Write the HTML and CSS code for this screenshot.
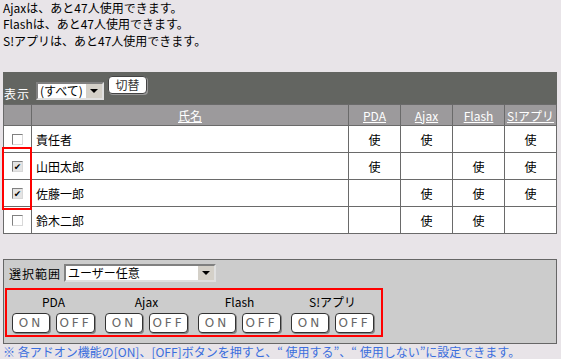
FILE: index.html
```html
<!DOCTYPE html>
<html lang="ja">
<head>
  <meta charset="UTF-8">
  <title>アドオン設定</title>
  <link rel="stylesheet" href="styles.css">
</head>
<body>

  <div class="notice">
    <p>Ajaxは、あと47人使用できます。</p>
    <p>Flashは、あと47人使用できます。</p>
    <p class="last">S!アプリは、あと47人使用できます。</p>
  </div>

  <div class="panel">
    <div class="toolbar">
      <span class="toolbar-label">表示</span>
      <div class="select select-small">
        <span class="select-text">(すべて)</span>
        <span class="select-arrow"></span>
      </div>
      <button class="btn-switch">切替</button>
    </div>

    <div class="table-wrap">
      <table class="users">
        <thead>
          <tr>
            <th class="col-check"></th>
            <th class="col-name"><a href="#">氏名</a></th>
            <th class="col-opt"><a href="#">PDA</a></th>
            <th class="col-opt"><a href="#">Ajax</a></th>
            <th class="col-opt"><a href="#">Flash</a></th>
            <th class="col-opt"><a href="#">S!アプリ</a></th>
          </tr>
        </thead>
        <tbody>
          <tr>
            <td class="col-check"><span class="check"></span></td>
            <td class="col-name">責任者</td>
            <td>使</td>
            <td>使</td>
            <td></td>
            <td>使</td>
          </tr>
          <tr>
            <td class="col-check"><span class="check checked">&#10004;</span></td>
            <td class="col-name">山田太郎</td>
            <td>使</td>
            <td></td>
            <td>使</td>
            <td>使</td>
          </tr>
          <tr>
            <td class="col-check"><span class="check checked">&#10004;</span></td>
            <td class="col-name">佐藤一郎</td>
            <td></td>
            <td>使</td>
            <td>使</td>
            <td>使</td>
          </tr>
          <tr>
            <td class="col-check"><span class="check"></span></td>
            <td class="col-name">鈴木二郎</td>
            <td></td>
            <td>使</td>
            <td>使</td>
            <td></td>
          </tr>
        </tbody>
      </table>
      <div class="mark-checks"></div>
    </div>
  </div>

  <div class="range-panel">
    <div class="range-row">
      <span class="range-label">選択範囲</span>
      <div class="select select-wide">
        <span class="select-text">ユーザー任意</span>
        <span class="select-arrow"></span>
      </div>
    </div>

    <div class="toggles">
      <div class="toggle-group">
        <div class="toggle-name">PDA</div>
        <div class="toggle-buttons">
          <button class="btn-on">ON</button>
          <button class="btn-off">OFF</button>
        </div>
      </div>
      <div class="toggle-group">
        <div class="toggle-name">Ajax</div>
        <div class="toggle-buttons">
          <button class="btn-on">ON</button>
          <button class="btn-off">OFF</button>
        </div>
      </div>
      <div class="toggle-group">
        <div class="toggle-name">Flash</div>
        <div class="toggle-buttons">
          <button class="btn-on">ON</button>
          <button class="btn-off">OFF</button>
        </div>
      </div>
      <div class="toggle-group">
        <div class="toggle-name">S!アプリ</div>
        <div class="toggle-buttons">
          <button class="btn-on">ON</button>
          <button class="btn-off">OFF</button>
        </div>
      </div>
    </div>
  </div>

  <p class="footnote">※ 各アドオン機能の[ON]、[OFF]ボタンを押すと、“ 使用する”、“ 使用しない”に設定できます。</p>

</body>
</html>
```

FILE: styles.css
```css
body {
  margin: 0;
  padding: 0 0 0 3px;
  background-color: #e8e4e8;
  color: #000;
  font-family: "Noto Sans CJK JP", "DejaVu Sans", sans-serif;
  font-size: 12px;
  line-height: 15px;
}

p {
  margin: 0;
}

.notice p {
  line-height: 16px;
}

.notice .last {
  margin-top: 1px;
}

/* upper panel */

.panel {
  width: 554px;
  margin-top: 23px;
  background-color: #636561;
}

.toolbar {
  height: 32px;
  display: flex;
  align-items: flex-start;
}

.toolbar-label {
  color: #fff;
  margin: 14px 6px 0 1px;
  letter-spacing: 1px;
}

.select {
  display: flex;
  background: #fff;
  border: 2px solid;
  border-color: #808080 #e0e0e0 #e0e0e0 #808080;
  box-sizing: border-box;
  height: 18px;
}

.select-text {
  flex: 1;
  padding-left: 2px;
  line-height: 14px;
  white-space: nowrap;
}

.select-arrow {
  width: 16px;
  background: #d4d0c8;
  border-left: 1px solid #fff;
  position: relative;
}

.select-arrow::after {
  content: "";
  position: absolute;
  left: 4px;
  top: 5px;
  border-left: 4px solid transparent;
  border-right: 4px solid transparent;
  border-top: 4px solid #000;
}

.select-small {
  width: 68px;
  margin-top: 10px;
}

.btn-switch {
  margin: 4px 0 0 4px;
  width: 39px;
  height: 18px;
  padding: 0;
  background: #fff;
  border: 1px solid #444;
  border-radius: 4px;
  box-shadow: 1px 1px 0 #999;
  font-family: inherit;
  font-size: 12px;
  line-height: 14px;
  color: #333;
}

.table-wrap {
  position: relative;
}

.users {
  width: 554px;
  border-collapse: collapse;
  background: #fff;
}

.users th,
.users td {
  border: 1px solid #6a6a6a;
  padding: 0;
  text-align: center;
}

.users th {
  height: 20px;
  background-color: #9c9a9c;
  font-weight: normal;
}

.users th a {
  color: #fff;
}

.users td {
  height: 26px;
}

.users .col-check {
  width: 27px;
}

.users .col-opt {
  width: 51px;
}

.users td.col-name {
  text-align: left;
  padding-left: 4px;
}

.check {
  display: block;
  width: 11px;
  height: 11px;
  margin: 0 auto 0 8px;
  box-sizing: border-box;
  border: 1px solid;
  border-color: #808080 #d8d8d8 #d8d8d8 #808080;
  background: #fff;
  font-size: 9px;
  line-height: 9px;
  text-align: center;
}

.check.checked {
  background: #e4e4e4;
}

.mark-checks {
  position: absolute;
  left: -1px;
  top: 43px;
  width: 26px;
  height: 59px;
  border: 2px solid #f00;
}

/* lower panel */

.range-panel {
  width: 554px;
  height: 85px;
  margin-top: 25px;
  box-sizing: border-box;
  background-color: #cccccc;
  border: 1px solid #666;
  padding: 4px 0 0 1px;
}

.range-row {
  display: flex;
  align-items: center;
}

.range-label {
  margin: 0 3px 0 4px;
  letter-spacing: 1px;
}

.select-wide {
  width: 152px;
}

.toggles {
  display: flex;
  gap: 10px;
  width: 378px;
  height: 49px;
  margin-top: 6px;
  box-sizing: border-box;
  border: 2px solid #f00;
  padding: 4px 0 0 5px;
}

.toggle-group {
  width: 83px;
}

.toggle-name {
  text-align: center;
  margin-bottom: 4px;
}

.toggle-buttons {
  display: flex;
  gap: 6px;
}

.btn-on,
.btn-off {
  height: 20px;
  padding: 0;
  background: #fff;
  border: 1px solid #333;
  border-radius: 4px;
  box-shadow: 1px 1px 0 #888;
  font-family: "DejaVu Sans", sans-serif;
  font-size: 12px;
  letter-spacing: 3px;
  color: #666;
}

.btn-on {
  width: 38px;
}

.btn-off {
  width: 39px;
}

.footnote {
  color: #3a6ede;
  line-height: 14px;
  margin-top: 1px;
}
```
